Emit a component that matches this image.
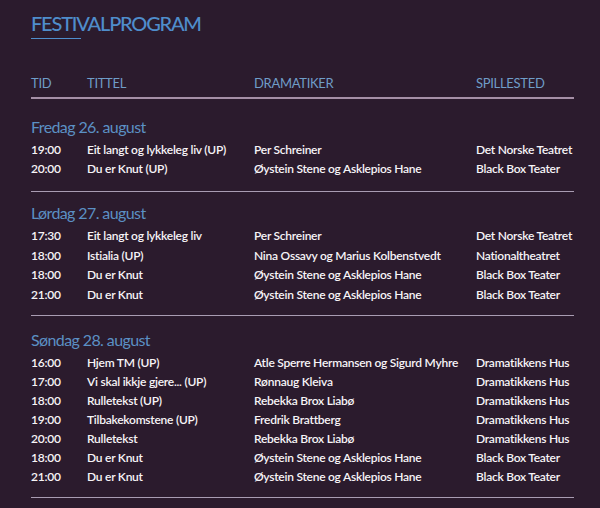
type Row = [string, string, string, string];

interface Day {
    title: string;
    rows: Row[];
}

const days: Day[] = [
    {
        title: 'Fredag 26. august',
        rows: [
            ['19:00', 'Eit langt og lykkeleg liv (UP)', 'Per Schreiner', 'Det Norske Teatret'],
            ['20:00', 'Du er Knut (UP)', 'Øystein Stene og Asklepios Hane', 'Black Box Teater'],
        ],
    },
    {
        title: 'Lørdag 27. august',
        rows: [
            ['17:30', 'Eit langt og lykkeleg liv', 'Per Schreiner', 'Det Norske Teatret'],
            ['18:00', 'Istialia (UP)', 'Nina Ossavy og Marius Kolbenstvedt', 'Nationaltheatret'],
            ['18:00', 'Du er Knut', 'Øystein Stene og Asklepios Hane', 'Black Box Teater'],
            ['21:00', 'Du er Knut', 'Øystein Stene og Asklepios Hane', 'Black Box Teater'],
        ],
    },
    {
        title: 'Søndag 28. august',
        rows: [
            ['16:00', 'Hjem TM (UP)', 'Atle Sperre Hermansen og Sigurd Myhre', 'Dramatikkens Hus'],
            ['17:00', 'Vi skal ikkje gjere... (UP)', 'Rønnaug Kleiva', 'Dramatikkens Hus'],
            ['18:00', 'Rulletekst (UP)', 'Rebekka Brox Liabø', 'Dramatikkens Hus'],
            ['19:00', 'Tilbakekomstene (UP)', 'Fredrik Brattberg', 'Dramatikkens Hus'],
            ['20:00', 'Rulletekst', 'Rebekka Brox Liabø', 'Dramatikkens Hus'],
            ['18:00', 'Du er Knut', 'Øystein Stene og Asklepios Hane', 'Black Box Teater'],
            ['21:00', 'Du er Knut', 'Øystein Stene og Asklepios Hane', 'Black Box Teater'],
        ],
    },
];

const cols = 'grid grid-cols-[56px_167px_222px_1fr]';
// spacing tuned per section
const sectionGap = ['mt-[18px]', 'mt-[11px]', 'mt-[14px]'];
const rowHeight = ['h-[19px]', 'h-[19.5px]', 'h-[19px]'];
const lineGap = ['mt-[13px]', 'mt-[11px]', 'mt-[11px]'];

export default function App() {
    return (
        <div className="w-[600px] h-[508px] overflow-hidden bg-[#2b1b2d] pl-[31px] pr-[26px] pt-[11px] font-['Lato','Open_Sans',sans-serif]">
            {/* heading */}
            <h1 className="text-[20px] leading-[24px] font-medium text-[#4f8dcb] tracking-[-1.2px]">FESTIVALPROGRAM</h1>
            <div className="mt-[3px] h-px w-[50px] bg-[#4f8dcb]" />

            <div className={`${cols} mt-[36px] text-[13px] leading-[16px] tracking-[-0.3px] text-[#6f9dc8]`}>
                <div>TID</div>
                <div>TITTEL</div>
                <div>DRAMATIKER</div>
                <div>SPILLESTED</div>
            </div>
            <div className="mt-[6px] h-[2px] bg-[#a58fa6]" />

            {days.map((day, i) => (
                <div key={day.title} className={sectionGap[i]}>
                    <div className="text-[16px] leading-[20px] tracking-[-0.6px] text-[#5b90c4]">{day.title}</div>
                    <div className="mt-[3px]">
                        {day.rows.map((r, idx) => (
                            <div key={idx} className={`${cols} ${rowHeight[i]} text-[12px] leading-[19px] font-semibold tracking-[-0.25px] text-[#f7f4f7]`}>
                                <div>{r[0]}</div>
                                <div>{r[1]}</div>
                                <div className="whitespace-nowrap">{r[2]}</div>
                                <div className="whitespace-nowrap">{r[3]}</div>
                            </div>
                        ))}
                    </div>
                    <div className={`${lineGap[i]} h-px bg-[#a99cb2]`} />
                </div>
            ))}
        </div>
    );
}
